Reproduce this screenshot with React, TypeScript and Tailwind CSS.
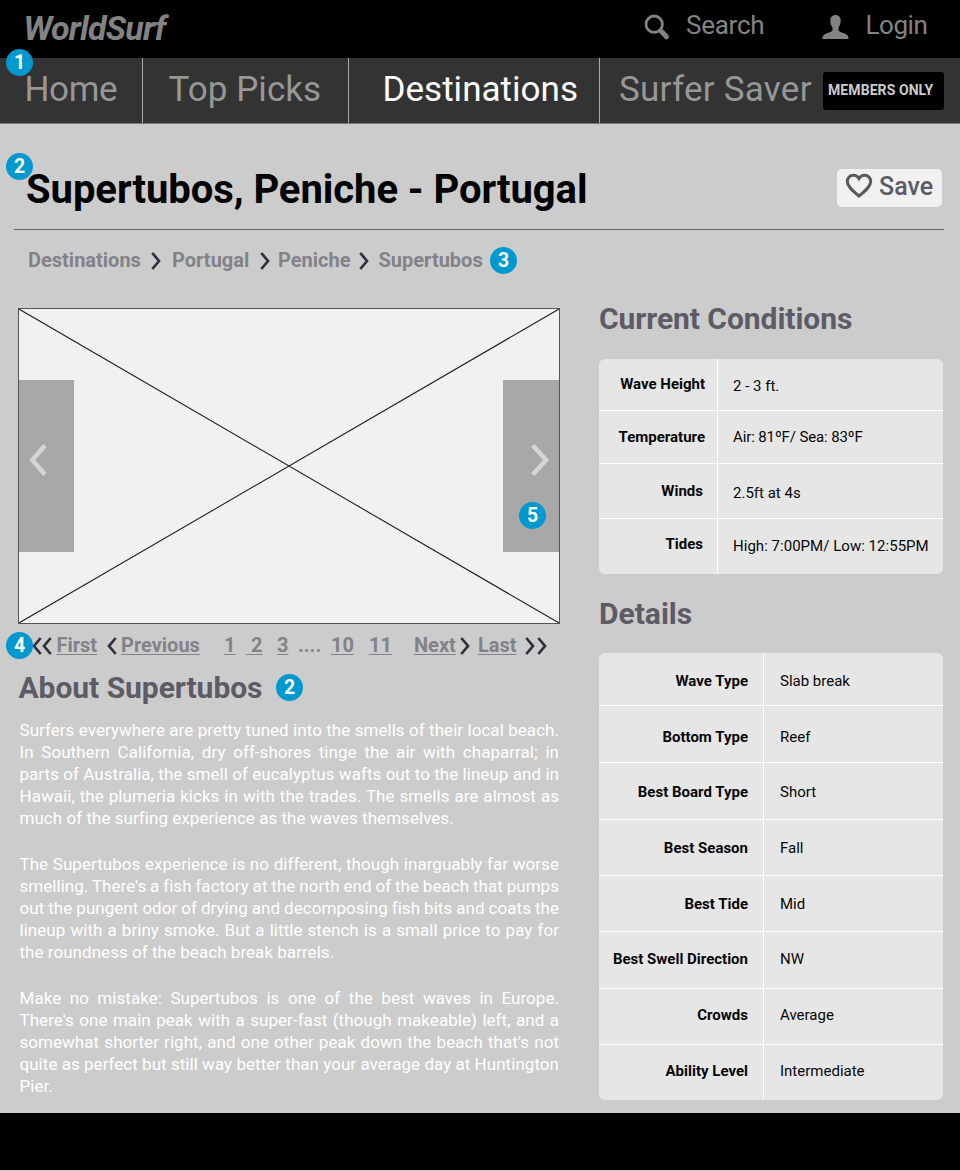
import type { ReactNode } from "react";

function Badge({ n, className = "" }: { n: number; className?: string }) {
  return (
    <span
      className={`flex h-[27px] w-[27px] items-center justify-center rounded-full bg-[#0099cf] text-[19.5px] leading-none font-bold text-white ${className}`}
    >
      {n}
    </span>
  );
}

function Chevron({ left = false, className = "" }: { left?: boolean; className?: string }) {
  return (
    <svg width="10" height="18" viewBox="0 0 10 18" className={`shrink-0 ${className}`}>
      <path
        d={left ? "M8.700 1L2 9l6.700 8" : "M1.300 1L8 9l-6.700 8"}
        fill="none"
        stroke="#312e3e"
        strokeWidth="2.7"
      />
    </svg>
  );
}

function Paddle({ left = false, children }: { left?: boolean; children?: ReactNode }) {
  return (
    <div className={`relative h-[172px] bg-[#a8a8a8] ${left ? "w-[55px]" : "w-[56px]"}`}>
      <svg width="55" height="172" viewBox="0 0 55 172">
        <path
          d={left ? "M26 65.500L13.300 80L26 94.500" : "M29.800 65.500L43.200 80L29.800 94.500"}
          fill="none"
          stroke="#d6d6d6"
          strokeWidth="4.4"
        />
      </svg>
      {children}
    </div>
  );
}

type Row = { label: string; value: string; row: string; l: string; v: string };

const conditions: Row[] = [
  { label: "Wave Height", value: "2 - 3 ft.", row: "h-[52px] border-b", l: "pt-[15px] pr-[12px]", v: "pt-[17px]" },
  { label: "Temperature", value: "Air: 81ºF/ Sea: 83ºF", row: "h-[53px] border-b", l: "pt-[16px] pr-[12px]", v: "pt-[16px] tracking-[-0.12px]" },
  { label: "Winds", value: "2.5ft at 4s", row: "h-[55px] border-b", l: "pt-[17px] pr-[14px]", v: "pt-[19px]" },
  { label: "Tides", value: "High: 7:00PM/ Low: 12:55PM", row: "h-[55px]", l: "pt-[15px] pr-[14px]", v: "pt-[17px] tracking-[0.03px]" },
];

const details: Row[] = [
  { label: "Wave Type", value: "Slab break", row: "h-[53px] border-b", l: "pt-[18px]", v: "pt-[18px]" },
  { label: "Bottom Type", value: "Reef", row: "h-[57px] border-b", l: "pt-[21px]", v: "pt-[21px]" },
  { label: "Best Board Type", value: "Short", row: "h-[57px] border-b", l: "pt-[19px]", v: "pt-[19px]" },
  { label: "Best Season", value: "Fall", row: "h-[56px] border-b", l: "pt-[18px]", v: "pt-[18px]" },
  { label: "Best Tide", value: "Mid", row: "h-[56px] border-b", l: "pt-[18px]", v: "pt-[18px]" },
  { label: "Best Swell Direction", value: "NW", row: "h-[57px] border-b", l: "pt-[17px]", v: "pt-[17px]" },
  { label: "Crowds", value: "Average", row: "h-[56px] border-b", l: "pt-[16px]", v: "pt-[16px]" },
  { label: "Ability Level", value: "Intermediate", row: "h-[55px]", l: "pt-[16px]", v: "pt-[16px]" },
];

const paragraphs = [
  [
    "Surfers everywhere are pretty tuned into the smells of their local beach.",
    "In Southern California, dry off-shores tinge the air with chaparral; in",
    "parts of Australia, the smell of eucalyptus wafts out to the lineup and in",
    "Hawaii, the plumeria kicks in with the trades. The smells are almost as",
    "much of the surfing experience as the waves themselves.",
  ],
  [
    "The Supertubos experience is no different, though inarguably far worse",
    "smelling. There's a fish factory at the north end of the beach that pumps",
    "out the pungent odor of drying and decomposing fish bits and coats the",
    "lineup with a briny smoke. But a little stench is a small price to pay for",
    "the roundness of the beach break barrels.",
  ],
  [
    "Make no mistake: Supertubos is one of the best waves in Europe.",
    "There's one main peak with a super-fast (though makeable) left, and a",
    "somewhat shorter right, and one other peak down the beach that's not",
    "quite as perfect but still way better than your average day at Huntington",
    "Pier.",
  ],
];

function Table({ rows, labelCell, valueCell }: { rows: Row[]; labelCell: string; valueCell: string }) {
  return (
    <div className="w-[344px] overflow-hidden rounded-[6px] bg-[#e6e6e6] text-[15px] leading-[20px] whitespace-nowrap text-[#060606]">
      {rows.map((r) => (
        <div key={r.label} className={`flex border-white ${r.row}`}>
          <div className={`shrink-0 border-r border-white text-right font-bold ${labelCell} ${r.l}`}>{r.label}</div>
          <div className={`${valueCell} ${r.v}`}>{r.value}</div>
        </div>
      ))}
    </div>
  );
}

const crumb = "shrink-0 text-[20px] leading-[24px] font-bold text-[#838289]";
const page = "shrink-0 text-[20px] leading-[24px] font-bold text-[#838289]";
const link = "underline decoration-1 underline-offset-2";

export default function App() {
  return (
    <div className="flex h-[1171px] w-[960px] flex-col overflow-hidden bg-[#ccc] font-['Roboto',sans-serif] whitespace-nowrap">
      <header className="flex h-[58px] shrink-0 bg-black text-[#838383]">
        <div className="w-[644px] pt-[12px] pl-[23.5px] text-[34px] leading-[32px] font-bold tracking-[-0.8px] italic">WorldSurf</div>
        <svg width="27" height="27" viewBox="0 0 27 27" className="mt-[14px] shrink-0">
          <circle cx="10.2" cy="10.2" r="8.2" fill="none" stroke="#838383" strokeWidth="2.8" />
          <path d="M14.500 15.500l3 3" stroke="#838383" strokeWidth="3" />
          <path d="M18 18l4.500 4.700" stroke="#838383" strokeWidth="5" strokeLinecap="round" />
        </svg>
        <span className="ml-[15px] w-[136px] pt-[9px] text-[26px] leading-[32px] tracking-[-0.25px]">Search</span>
        <svg width="27" height="26" viewBox="0 0 27 26" className="mt-[14px] shrink-0">
          <path
            d="M13.5 1c3.2 0 5.2 2.200 5.200 5.600 0 3.400-1.200 5.600-2.200 7v2.400c0 1.500 3 2.300 6 3.500 3 1.200 4 2.300 4 5.500H.500c0-3.200 1-4.300 4-5.500 3-1.200 6-2 6-3.500v-2.400c-1-1.400-2.200-3.600-2.200-7C8.300 3.200 10.300 1 13.500 1z"
            fill="#838383"
          />
        </svg>
        <span className="ml-[16.5px] pt-[9px] text-[26px] leading-[32px] tracking-[-0.45px]">Login</span>
      </header>

      <nav className="relative flex h-[66px] shrink-0 border-b border-[#777] bg-[#333] text-[35px] leading-[40px] text-[#979797]">
        <Badge n={1} className="absolute top-[-9px] left-[6px]" />
        <div className="w-[143px] shrink-0 border-r border-[#aaa] pt-[12px] pl-[24.5px] tracking-[-0.35px]">Home</div>
        <div className="w-[206px] shrink-0 border-r border-[#aaa] pt-[12px] pl-[25.5px] tracking-[0.05px]">Top Picks</div>
        <div className="w-[251px] shrink-0 border-r border-[#aaa] pt-[12px] pl-[33.5px] tracking-[0.02px] text-white">Destinations</div>
        <div className="w-[223px] shrink-0 pt-[12px] pl-[19px] tracking-[0.25px]">Surfer Saver</div>
        <div className="mt-[14px] h-[38px] w-[121px] rounded-[3px] bg-black pl-[5px] text-[14px] leading-[37px] font-bold tracking-[0.08px] text-[#ccc]">
          MEMBERS ONLY
        </div>
      </nav>

      <main className="h-[989px] shrink-0">
        <div className="relative ml-[14px] flex h-[106px] w-[930px] border-b border-[#666]">
          <Badge n={2} className="absolute top-[29px] left-[-8px]" />
          <h1 className="w-[823px] pt-[42px] pl-[12px] text-[40px] leading-[48px] font-bold tracking-[-0.06px] text-black">Supertubos, Peniche - Portugal</h1>
          <button className="mt-[45px] flex h-[38px] w-[105px] rounded-[5px] bg-[#f1f1f1] text-[#5c5b63]">
            <svg width="28" height="26" viewBox="0 0 28 26" className="mt-[4px] ml-[8px] shrink-0">
              <path
                d="M14 23C7 17.500 2.300 13.500 2.300 8.600C2.300 5 5 2.300 8.300 2.300C10.700 2.300 12.800 3.500 14 5.500C15.200 3.500 17.300 2.300 19.700 2.300C23 2.300 25.700 5 25.700 8.600C25.700 13.500 21 17.500 14 23Z"
                fill="none"
                stroke="#5a5a5a"
                strokeWidth="3"
              />
            </svg>
            <span className="ml-[6px] pt-[2px] text-[25px] leading-[32px] font-medium">Save</span>
          </button>
        </div>

        <div className="flex h-[78px] pt-[18px] pl-[28px]">
          <span className={`w-[122.5px] ${crumb}`}>Destinations</span>
          <Chevron className="mt-[4px]" />
          <span className={`ml-[11.5px] w-[87.5px] ${crumb}`}>Portugal</span>
          <Chevron className="mt-[4px]" />
          <span className={`ml-[8.5px] w-[80.5px] ${crumb}`}>Peniche</span>
          <Chevron className="mt-[4px]" />
          <span className={`ml-[10px] w-[111.5px] ${crumb}`}>Supertubos</span>
          <Badge n={3} className="mt-[-1px]" />
        </div>

        <div className="flex">
          <section className="w-[599px] shrink-0">
            <div className="relative ml-[18px] h-[316px] w-[542px] border border-[#555] bg-[#f1f1f1]">
              <svg width="540" height="314" viewBox="0 0 540 314" className="absolute inset-0">
                <path d="M0 0L540 314M0 314L540 0" stroke="#222" strokeWidth="1.1" />
              </svg>
              <div className="relative flex justify-between pt-[71px]">
                <Paddle left />
                <Paddle>
                  <Badge n={5} className="absolute top-[122px] left-[16px]" />
                </Paddle>
              </div>
            </div>

            <div className="relative flex h-[46px] pt-[9px] pl-[32px]">
              <Chevron left className="mt-[4px]" />
              <Chevron left className="mt-[4px]" />
              <Badge n={4} className="absolute top-[8px] left-[6px]" />
              <span className={`ml-[4.5px] w-[50.5px] ${page}`}><span className={link}>First</span></span>
              <Chevron left className="mt-[4px]" />
              <span className={`ml-[4px] w-[103px] ${page}`}><span className={link}>Previous</span></span>
              <span className={`w-[22px] ${page}`}><span className={link}>1</span></span>
              <span className={`w-[31px] whitespace-pre ${page}`}><span className={link}> 2</span></span>
              <span className={`w-[21px] ${page}`}><span className={link}>3</span></span>
              <span className={`w-[33px] ${page}`}>....</span>
              <span className={`w-[38px] ${page}`}><span className={link}>10</span></span>
              <span className={`w-[45px] ${page}`}><span className={link}>11</span></span>
              <span className={`w-[46px] ${page}`}><span className={link}>Next</span></span>
              <Chevron className="mt-[4px]" />
              <span className={`ml-[8px] w-[47px] ${page}`}><span className={link}>Last</span></span>
              <Chevron className="mt-[4px]" />
              <Chevron className="mt-[4px] ml-[2px]" />
            </div>

            <div className="flex h-[49px] pl-[18.5px]">
              <h2 className="w-[257.5px] text-[30px] leading-[36px] font-bold tracking-[-0.04px] text-[#5c5b66]">About Supertubos</h2>
              <Badge n={2} className="mt-[4px]" />
            </div>

            <div className="flex w-[559px] flex-col gap-[24px] pl-[19.5px] text-[17px] leading-[22px] tracking-[0.04px] text-white">
              {paragraphs.map((lines) => (
                <p key={lines[0]}>
                  {lines.map((line, i) => (
                    <span
                      key={line}
                      className={i < 4 ? "block text-justify [word-spacing:-1px] whitespace-normal [text-align-last:justify]" : "block"}
                    >
                      {line}
                    </span>
                  ))}
                </p>
              ))}
            </div>
          </section>

          <aside>
            <h2 className="h-[51px] text-[30px] leading-[22px] font-bold tracking-[-0.05px] text-[#5c5b66]">Current Conditions</h2>
            <Table rows={conditions} labelCell="w-[119px]" valueCell="pl-[15px]" />
            <h2 className="h-[79px] pt-[22px] text-[30px] leading-[36px] font-bold text-[#5c5b66]">Details</h2>
            <Table rows={details} labelCell="w-[165px] pr-[15px]" valueCell="pl-[16px]" />
          </aside>
        </div>
      </main>

      <footer className="h-[57px] shrink-0 bg-black" />
    </div>
  );
}
